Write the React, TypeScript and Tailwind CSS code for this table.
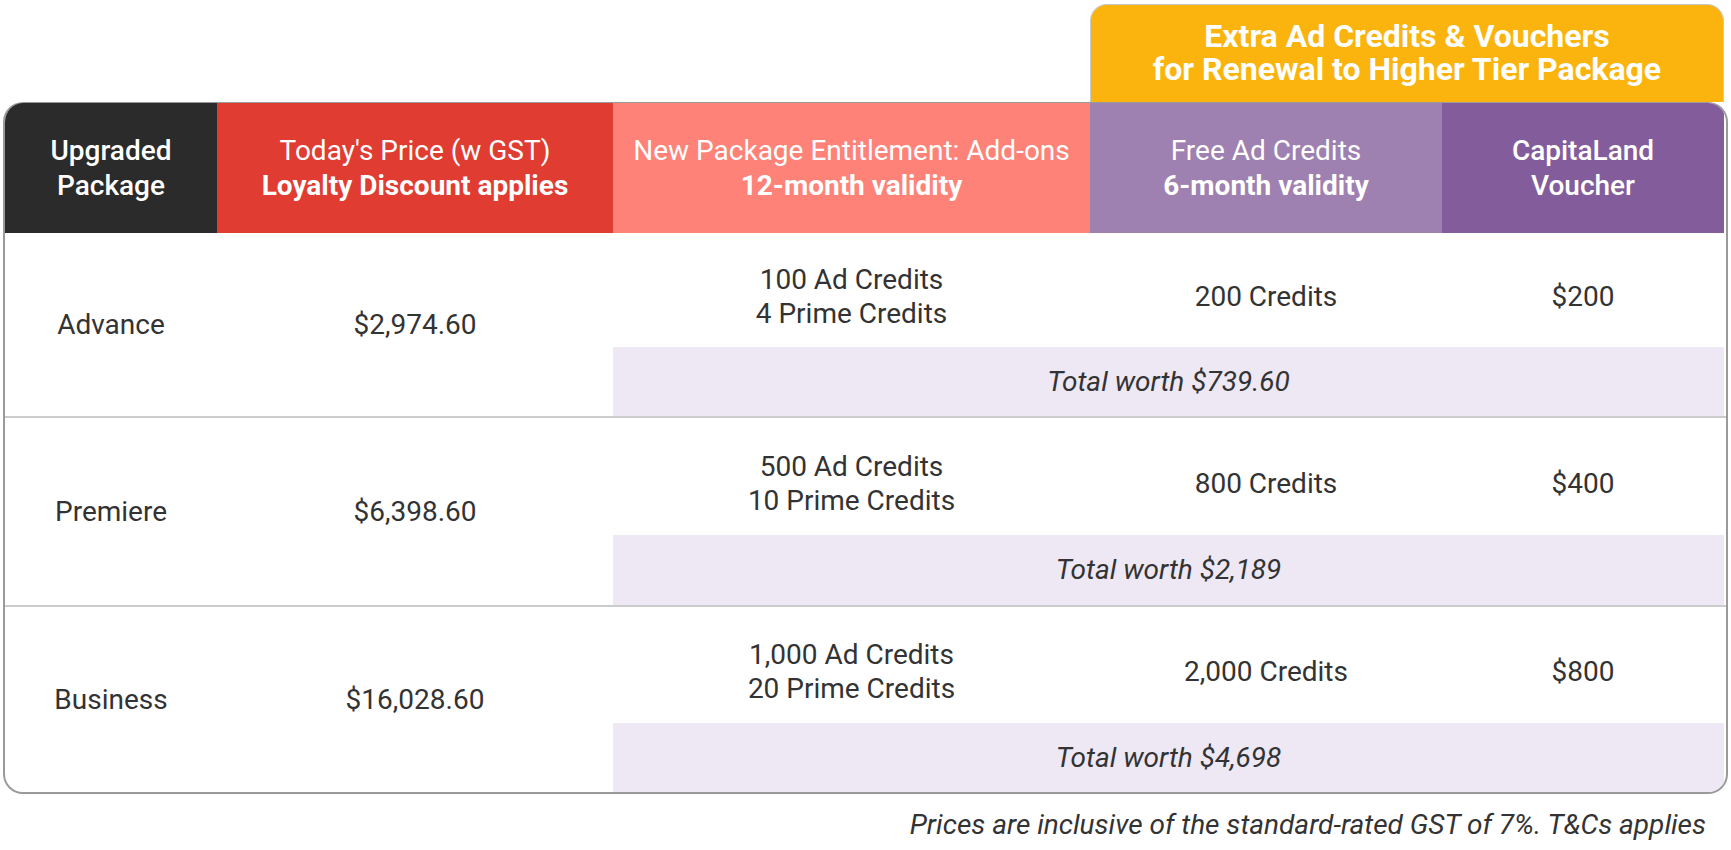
import { FC } from 'react';

interface PackageRow
{
  name: string;
  price: string;
  entitlement: string[];
  freeCredits: string;
  voucher: string;
  total: string;
  rows: string; // grid rows for the top part and the grey "total" band
}

const packages: PackageRow[] = [
  {
    name: 'Advance',
    price: '$2,974.60',
    entitlement: ['100 Ad Credits', '4 Prime Credits'],
    freeCredits: '200 Credits',
    voucher: '$200',
    total: 'Total worth $739.60',
    rows: 'grid-rows-[114px_69px]',
  },
  {
    name: 'Premiere',
    price: '$6,398.60',
    entitlement: ['500 Ad Credits', '10 Prime Credits'],
    freeCredits: '800 Credits',
    voucher: '$400',
    total: 'Total worth $2,189',
    rows: 'grid-rows-[117px_70px]',
  },
  {
    name: 'Business',
    price: '$16,028.60',
    entitlement: ['1,000 Ad Credits', '20 Prime Credits'],
    freeCredits: '2,000 Credits',
    voucher: '$800',
    total: 'Total worth $4,698',
    rows: 'grid-rows-[116px_69px]',
  },
];

const cols = 'grid grid-cols-[212px_396px_477px_352px_282px]';

const App: FC = () => {
  return (
    <div className="w-[1731px] h-[850px] bg-white font-['Roboto',sans-serif] text-[28px] text-[#333333]">
      {/* Yellow banner above the last two columns */}
      <div className={`${cols} mx-[3px] px-[2px] pt-[4px]`}>
        <div className="col-start-4 col-span-2 h-[98px] bg-[#fbb40d] rounded-t-[17px] border border-b-0 border-[#c9c9c9] flex items-center justify-center pb-[1px]">
          <p className="text-center text-white font-bold text-[32px] leading-[33px]">
            Extra Ad Credits &amp; Vouchers
            <br />
            for Renewal to Higher Tier Package
          </p>
        </div>
      </div>

      {/* Table */}
      <div className="mx-[3px] border-2 border-t border-[#9a9a9a] rounded-[20px] overflow-hidden">
        <div className={`${cols} h-[130px] text-white leading-[35px] text-center`}>
          <div className="bg-[#2b2b2b] flex flex-col items-center justify-center font-medium">
            <span>Upgraded</span>
            <span>Package</span>
          </div>
          <div className="bg-[#e03c31] flex flex-col items-center justify-center">
            <span>Today's Price (w GST)</span>
            <span className="font-bold">Loyalty Discount applies</span>
          </div>
          <div className="bg-[#ff8279] flex flex-col items-center justify-center">
            <span>New Package Entitlement: Add-ons</span>
            <span className="font-bold">12-month validity</span>
          </div>
          <div className="bg-[#9e81b0] flex flex-col items-center justify-center">
            <span>Free Ad Credits</span>
            <span className="font-bold">6-month validity</span>
          </div>
          <div className="bg-[#835d9b] flex flex-col items-center justify-center font-medium">
            <span>CapitaLand</span>
            <span>Voucher</span>
          </div>
        </div>

        {packages.map((pkg, i) => (
          <div
            key={pkg.name}
            className={`${cols} ${pkg.rows} ${i < packages.length - 1 ? 'border-b-2 border-[#cccccc]' : ''}`}
          >
            <div className="row-span-2 flex items-center justify-center">{pkg.name}</div>
            <div className="row-span-2 flex items-center justify-center">{pkg.price}</div>
            <div className="flex flex-col items-center justify-center pt-[14px] leading-[34px]">
              {pkg.entitlement.map((line) => (
                <span key={line}>{line}</span>
              ))}
            </div>
            <div className="flex items-center justify-center pt-[14px]">{pkg.freeCredits}</div>
            <div className="flex items-center justify-center pt-[14px]">{pkg.voucher}</div>
            <div className="col-span-3 bg-[#ede8f3] flex items-center justify-center italic">
              {pkg.total}
            </div>
          </div>
        ))}
      </div>

      <p className="mt-[14px] pr-[25px] text-right italic text-[28px] leading-[34px] text-[#333333]">
        Prices are inclusive of the standard-rated GST of 7%. T&amp;Cs applies
      </p>
    </div>
  );
};

export default App;
